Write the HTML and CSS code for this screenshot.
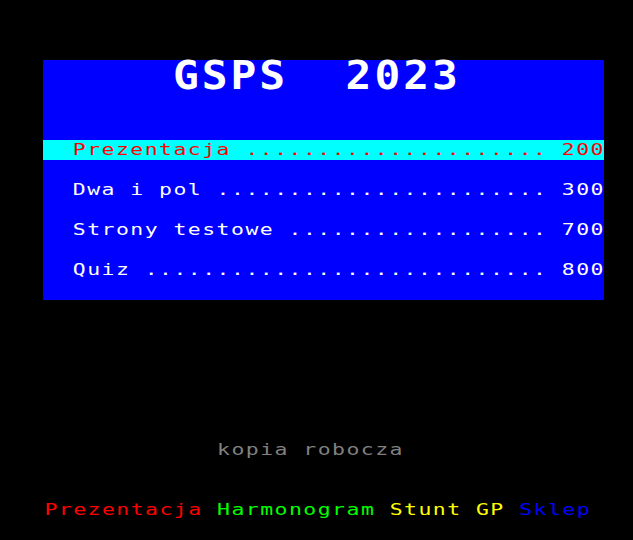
FILE: index.html
```html
<!DOCTYPE html>
<html lang="pl">
<head>
<meta charset="utf-8">
<title>GSPS 2023</title>
<link rel="stylesheet" href="styles.css">
</head>
<body>
<div class="screen">
  <div class="panel">
    <div class="title"><span class="big">GSPS  2023</span></div>
    <div class="menu">
      <div class="row sel"><span class="txt">  Prezentacja ..................... 200</span></div>
      <div class="row"><span class="txt">  Dwa i pol ....................... 300</span></div>
      <div class="row"><span class="txt">  Strony testowe .................. 700</span></div>
      <div class="row"><span class="txt">  Quiz ............................ 800</span></div>
    </div>
  </div>
  <div class="line draft"><span class="txt">             kopia robocza</span></div>
  <div class="line nav"><span class="txt"> <span class="red">Prezentacja</span> <span class="green">Harmonogram</span> <span class="yellow">Stunt GP</span> <span class="blue">Sklep</span></span></div>
</div>
</body>
</html>
```

FILE: styles.css
```css
html, body {
  margin: 0;
  padding: 0;
  background: #000;
}
body {
  width: 633px;
  height: 540px;
  overflow: hidden;
  font-family: "DejaVu Sans Mono", "Liberation Mono", monospace;
  font-size: 16.5px;
  color: #fff;
}
.screen {
  padding-top: 60px;
  display: flex;
  flex-direction: column;
}
.txt {
  display: inline-block;
  white-space: pre;
  letter-spacing: 1.131px;
  transform: scaleX(1.3);
  transform-origin: 0 0;
}
.panel {
  margin-left: 43px;
  width: 561px;
  height: 240px;
  background: #0000ff;
  display: flex;
  flex-direction: column;
}
.title {
  height: 40px;
  margin-bottom: 40px;
  line-height: 18px;
  padding-left: 130.4px;
}
.big {
  display: inline-block;
  white-space: pre;
  font-weight: bold;
  letter-spacing: 1.131px;
  transform: translateY(-4.5px) scale(2.6, 2.4);
  transform-origin: 0 0;
}
.menu {
  display: flex;
  flex-direction: column;
  gap: 20px;
}
.row {
  height: 20px;
  line-height: 20px;
  padding-left: 1px;
}
.row.sel {
  background: #00ffff;
  color: #ff0000;
}
.line {
  height: 20px;
  line-height: 20px;
  padding-left: 29.6px;
}
.draft {
  margin-top: 140px;
  color: #808080;
}
.nav {
  margin-top: 40px;
}
.red { color: #ff0000; }
.green { color: #00ff00; }
.yellow { color: #ffff00; }
.blue { color: #0000ff; }
```
